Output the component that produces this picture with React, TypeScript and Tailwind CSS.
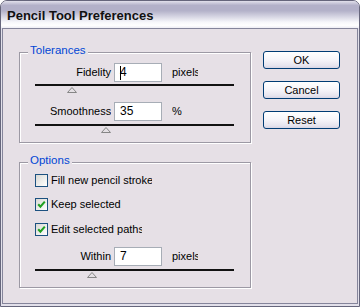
import React from "react";

const FACE = "bg-[#e6e0e6]";

function Thumb({ className }: { className: string }) {
  return (
    <svg
      className={`absolute top-[3px] ${className}`}
      width="10"
      height="6"
      viewBox="0 0 10 6"
    >
      <polygon points="0.5,5.5 5,0.5 9.5,5.5" fill="#e4e0e4" stroke="#868686" strokeWidth="1" />
    </svg>
  );
}

function Slider({ thumb, mt }: { thumb: string; mt: string }) {
  return (
    <div className={`relative ml-[15px] h-[2px] w-[199px] bg-[#121212] ${mt}`}>
      <Thumb className={thumb} />
    </div>
  );
}

function Field({ value, cursor }: { value: string; cursor?: boolean }) {
  return (
    <div className="relative ml-[3px] flex h-[19px] w-[48px] items-center border border-[#a7adb6] bg-white pl-[5px] text-[12px] leading-[15px] text-black">
      {cursor && <span className="absolute left-[5px] top-[2px] h-[14px] w-px bg-black" />}
      {value}
    </div>
  );
}

function Check({ checked, label, w }: { checked: boolean; label: string; w: string }) {
  return (
    <div className="ml-[15px] flex h-[13px] items-center">
      <div className="relative h-[13px] w-[13px] border border-[#1c5180] bg-[linear-gradient(135deg,#d9d9d4,#ffffff)]">
        {checked && (
          <svg className="absolute left-0 top-0" width="11" height="11" viewBox="0 0 11 11">
            <polyline points="2.2,5.2 4.4,7.6 8.8,2.6" fill="none" stroke="#21a121" strokeWidth="2.1" />
          </svg>
        )}
      </div>
      <div className={`ml-[3px] overflow-hidden whitespace-nowrap ${w}`}>{label}</div>
    </div>
  );
}

function Button({ label }: { label: string }) {
  return (
    <div className="flex h-[18px] w-[77px] items-center justify-center rounded-[3px] border border-[#003c74] bg-[linear-gradient(180deg,#ffffff_0%,#f7f6fa_45%,#e6e4ee_85%,#d8d5e4_100%)] text-[11px] leading-[13px] text-black">
      {label}
    </div>
  );
}

export default function App() {
  return (
    <div className="h-[307px] w-[360px] bg-white font-['Liberation_Sans',Arial,sans-serif] text-[11px] leading-[13px] text-black">
      <div className="flex h-full w-full flex-col rounded-t-[7px] border border-[#66667c] bg-[#e2e0ea]">
        <div className="h-[27px] rounded-t-[6px] bg-[linear-gradient(180deg,#e2e1ec_0%,#b3b1c9_16%,#b3b1c9_36%,#d6d5e3_58%,#f6f6fa_78%,#ffffff_90%,#eeedf4_100%)] pl-[6px] pt-[7px] text-[13px] font-bold leading-[16px] text-[#111]">
          Pencil Tool Preferences
        </div>
        <div className={`mx-px mb-[2px] flex flex-1 border border-[#85859b] ${FACE}`}>
          <div className="flex flex-col pl-[16px] pt-[23px]">
            {/* Tolerances */}
            <div className="relative h-[91px] w-[232px] border border-[#9c99a4] shadow-[1px_1px_0_#fff,inset_1px_1px_0_#fff]">
              <span className={`absolute -top-[10px] left-[8px] px-[2px] text-[11.5px] leading-[14px] text-[#0046d5] ${FACE}`}>
                Tolerances
              </span>
              <div className="mt-[10px] flex h-[19px] items-center">
                <div className="w-[91px] whitespace-nowrap text-right">Fidelity</div>
                <Field value="4" cursor />
                <div className="ml-[10px] w-[26px] overflow-hidden whitespace-nowrap">pixels</div>
              </div>
              <Slider mt="mt-[2px]" thumb="left-[32px]" />
              <div className="mt-[16px] flex h-[19px] items-center">
                <div className="ml-[30px] w-[61px] overflow-hidden whitespace-nowrap">Smoothness</div>
                <Field value="35" />
                <div className="ml-[10px] w-[26px] overflow-hidden whitespace-nowrap">%</div>
              </div>
              <Slider mt="mt-[3px]" thumb="left-[66px]" />
            </div>

            {/* Options */}
            <div className="relative mt-[19px] h-[126px] w-[232px] border border-[#9c99a4] shadow-[1px_1px_0_#fff,inset_1px_1px_0_#fff]">
              <span className={`absolute -top-[10px] left-[8px] px-[2px] text-[11.5px] leading-[14px] text-[#0046d5] ${FACE}`}>
                Options
              </span>
              <div className="mt-[11px]">
                <Check checked={false} label="Fill new pencil strokes" w="w-[101px]" />
              </div>
              <div className="mt-[11px]">
                <Check checked label="Keep selected" w="w-[100px]" />
              </div>
              <div className="mt-[12px]">
                <Check checked label="Edit selected paths" w="w-[91px]" />
              </div>
              <div className="mt-[11px] flex h-[19px] items-center">
                <div className="w-[91px] whitespace-nowrap text-right">Within</div>
                <Field value="7" />
                <div className="ml-[10px] w-[26px] overflow-hidden whitespace-nowrap">pixels</div>
              </div>
              <Slider mt="mt-[3px]" thumb="left-[52px]" />
            </div>
          </div>

          <div className="ml-[12px] flex flex-col gap-[12px] pt-[22px]">
            <Button label="OK" />
            <Button label="Cancel" />
            <Button label="Reset" />
          </div>
        </div>
      </div>
    </div>
  );
}
